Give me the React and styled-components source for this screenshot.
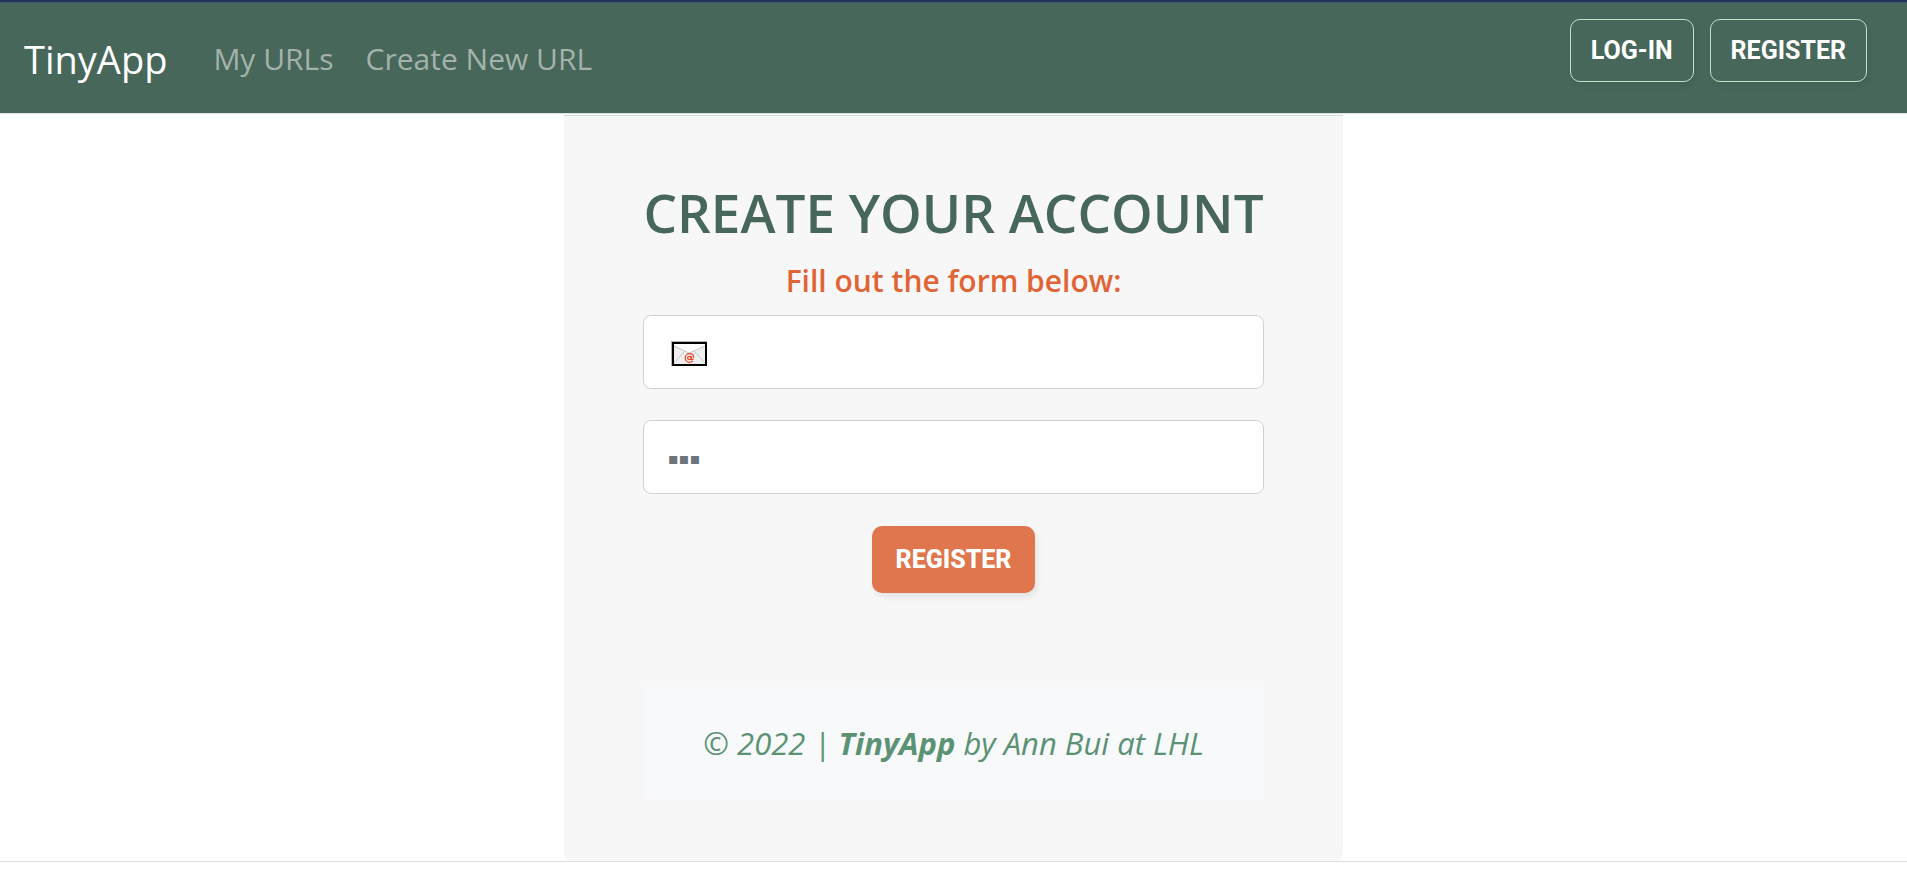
import React from "react";
import styled, { createGlobalStyle } from "styled-components";

const GlobalStyle = createGlobalStyle`
  * { box-sizing: border-box; }
  body {
    margin: 0;
    background: #fff;
    font-family: "Open Sans", "Noto Sans", sans-serif;
  }
`;

const Navbar = styled.header`
  display: flex;
  align-items: flex-start;
  height: 114px;
  padding: 0 40px 0 24px;
  background: #47675a;
  border-top: 2px solid #28335c;
  border-bottom: 1px solid #dee2e0;
  box-shadow: inset 0 1px 0 #43596f;
`;

const Brand = styled.a`
  margin-right: 46px;
  padding-top: 29px;
  color: #fff;
  font-size: 38px;
  line-height: 56px;
  text-decoration: none;
`;

const NavLinks = styled.nav`
  display: flex;
  flex: 1;
  gap: 32px;
  padding-top: 33px;
`;

const NavLink = styled.a`
  color: #a3b3ac;
  font-size: 30px;
  line-height: 48px;
  text-decoration: none;
  white-space: nowrap;
`;

const NavActions = styled.div`
  display: flex;
  gap: 16px;
  padding-top: 17px;
`;

const Button = styled.button`
  padding: 0 ${(p) => (p.$primary ? 23 : 20)}px;
  height: ${(p) => (p.$primary ? 67 : 63)}px;
  border: ${(p) => (p.$primary ? "0" : "1px solid #bfe3c6")};
  border-radius: 10px;
  background: ${(p) => (p.$primary ? "#df764d" : "transparent")};
  box-shadow: 2px 4px 6px rgba(0, 0, 0, ${(p) => (p.$primary ? 0.08 : 0.06)});
  color: #fff;
  font: ${(p) => (p.$primary ? 800 : 700)} 25px/32px Roboto, sans-serif;
`;

const Page = styled.main`
  padding-top: 1px;
  border-bottom: 1px solid #dcdddd;
`;

const Card = styled.section`
  display: flex;
  flex-direction: column;
  align-items: center;
  max-width: 779px;
  margin: 0 auto;
  padding: 61px 79px 62px;
  background: #f7f7f7;
  border-top: 1px solid #d5dad7;
  border-radius: 0 0 8px 8px;
`;

const Title = styled.h1`
  margin: 0;
  color: #47675a;
  font-size: 53px;
  font-weight: 600;
  line-height: 72px;
  white-space: nowrap;
`;

const Form = styled.form`
  display: flex;
  flex-direction: column;
  align-items: center;
  width: 100%;
`;

const Prompt = styled.h2`
  margin: 10px 0 12px;
  color: #e06536;
  font-size: 30px;
  font-weight: 600;
  line-height: 44px;
`;

const Field = styled.div`
  position: relative;
  width: 100%;
  margin-bottom: ${(p) => (p.$last ? 32 : 31)}px;
`;

const Input = styled.input`
  display: block;
  width: 100%;
  height: 74px;
  padding: 0 24px 8px;
  border: 1px solid #cfd1d6;
  border-radius: 8px;
  background: #fff;
  color: #212529;
  font: 28px/40px "Open Sans", "Noto Sans", sans-serif;

  &::placeholder {
    color: #6c757d;
    font: 16px/32px "DejaVu Sans", sans-serif;
    opacity: 1;
  }
`;

const Envelope = styled.svg`
  position: absolute;
  left: 28px;
  top: 26px;
  pointer-events: none;
`;

const Footer = styled.footer`
  width: 100%;
  margin-top: 94px;
  padding: 32px 0;
  background: #f8f9fb;
  color: #5b9274;
  font-size: 31px;
  font-style: italic;
  line-height: 48px;
  text-align: center;
`;

export default function App() {
  return (
    <>
      <GlobalStyle />
      <Navbar>
        <Brand href="#">TinyApp</Brand>
        <NavLinks>
          <NavLink href="#urls">My URLs</NavLink>
          <NavLink href="#new">Create New URL</NavLink>
        </NavLinks>
        <NavActions>
          <Button type="button">LOG-IN</Button>
          <Button type="button">REGISTER</Button>
        </NavActions>
      </Navbar>
      <Page>
        <Card>
          <Title>CREATE YOUR ACCOUNT</Title>
          <Form onSubmit={(e) => e.preventDefault()}>
            <Prompt>Fill out the form below:</Prompt>
            <Field>
              <Input type="email" aria-label="Email" />
              <Envelope width="36" height="25" viewBox="0 0 36 25" aria-hidden="true">
                <path d="M0 0H36V1H1V25H0Z" fill="#b5b5b5" />
                <rect x="2" y="2" width="33" height="22" fill="#efefef" />
                <path d="M3 3H34V4L21 11Q18.500 12.500 16 11L3 4Z" fill="#fff" />
                <path d="M3 5L18 12L34 5M3 22L14 10M34 22L23 10" fill="none" stroke="#c9c9c9" />
                <rect x="2" y="2" width="33" height="22" fill="none" stroke="#000" strokeWidth="2" />
                <circle cx="18.500" cy="17" r="4.300" fill="none" stroke="#f0452b" strokeWidth="1.200" strokeDasharray="23 4" strokeDashoffset="-3" />
                <circle cx="18.300" cy="17" r="1.700" fill="none" stroke="#f0452b" strokeWidth="1.200" />
                <path d="M20.300 15V18.300Q21.500 19.300 22.500 17.500" fill="none" stroke="#f0452b" strokeWidth="1.200" />
              </Envelope>
            </Field>
            <Field $last>
              <Input type="password" aria-label="Password" placeholder="▪▪▪" />
            </Field>
            <Button type="submit" $primary>REGISTER</Button>
          </Form>
          <Footer>
            © 2022 | <strong>TinyApp</strong> by Ann Bui at LHL
          </Footer>
        </Card>
      </Page>
    </>
  );
}
